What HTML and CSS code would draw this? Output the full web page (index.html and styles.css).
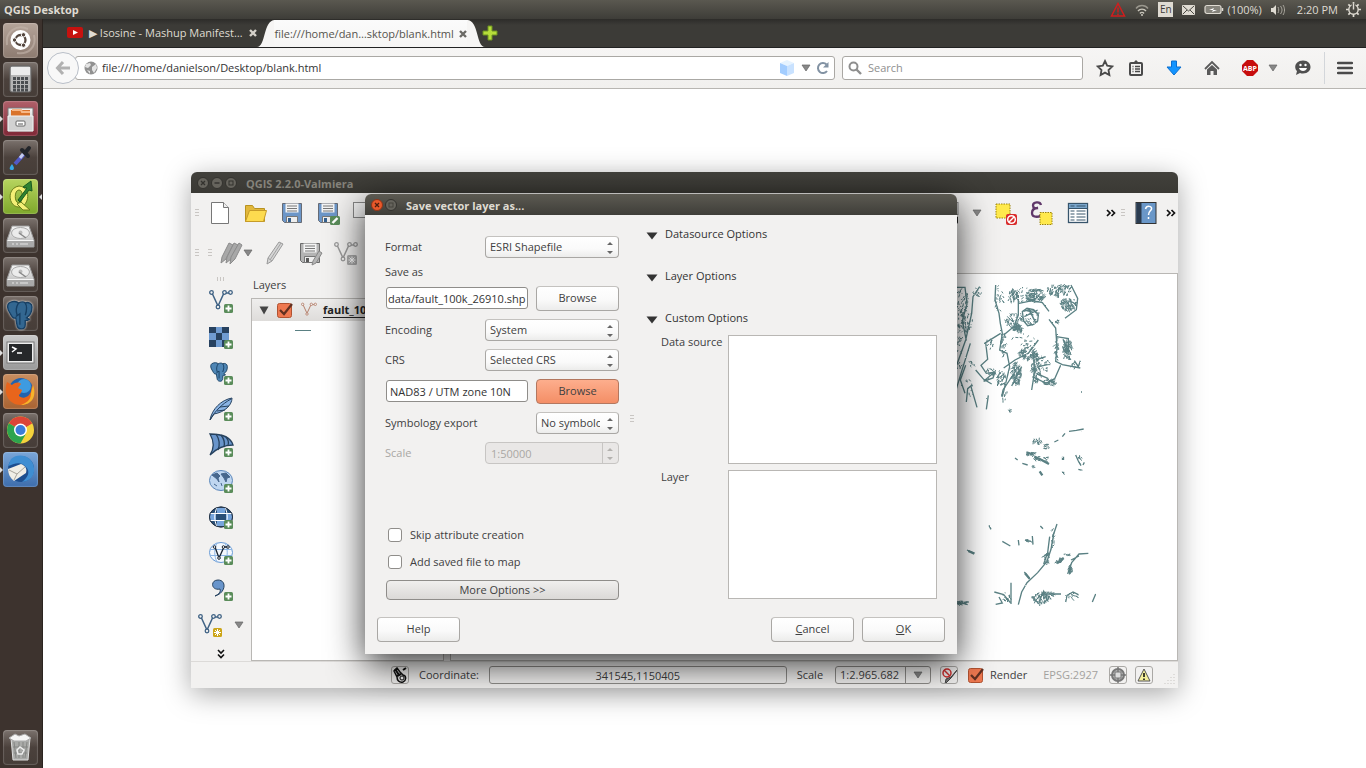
FILE: index.html
```html
<!DOCTYPE html>
<html lang="en">
<head>
<meta charset="utf-8">
<title>QGIS Desktop</title>
<link rel="stylesheet" href="styles.css">
</head>
<body>
<svg class="defs" aria-hidden="true">
  <defs>
    <linearGradient id="metal" x1="0" y1="0" x2="0" y2="1"><stop offset="0" stop-color="#f4f4f4"/><stop offset="1" stop-color="#b4b4b4"/></linearGradient>
    <filter id="rough" x="0" y="0" width="1" height="1"><feTurbulence type="fractalNoise" baseFrequency=".25" numOctaves="2" seed="4"/><feDisplacementMap in="SourceGraphic" scale="5" xChannelSelector="R" yChannelSelector="G"/></filter>
    <symbol id="plus" viewBox="0 0 24 24"><rect x="15" y="15" width="9" height="9" rx="1.5" fill="#5a8c5a"/><path d="M19.5 16.500v6M16.500 19.500h6" stroke="#fff" stroke-width="1.800"/></symbol>
    <symbol id="nodes" viewBox="0 0 24 24"><path d="M3 4l6 13 6-13h6" fill="none" stroke="currentColor" stroke-width="1.500"/><g fill="#f2f1f0" stroke="currentColor" stroke-width="1.300"><circle cx="2.500" cy="3.500" r="1.800"/><circle cx="9" cy="18" r="1.800"/><circle cx="15.500" cy="3.500" r="1.800"/><circle cx="21.500" cy="3.500" r="1.800"/></g></symbol>
    <symbol id="floppy" viewBox="0 0 24 24"><path d="M2.500 2.500h19v19h-17l-2-2z" fill="currentColor" stroke="#666b75"/><path d="M5.500 2.500h13v9h-13z" fill="#f4f4f4"/><path d="M7 5h10M7 7.500h10M7 10h10" stroke="#777"/><path d="M6.500 15.500h11v6h-11z" fill="#eee" stroke="#777"/><rect x="8" y="17" width="3" height="4" fill="#35608e"/></symbol>
    <symbol id="pencil" viewBox="0 0 24 24"><path d="M17 1l4 2-11 17-5 3 1-6z" fill="#d5d5d5" stroke="#999"/><path d="M19 2L8 19M6 17l4 3" stroke="#a2a2a2" fill="none"/></symbol>
    <symbol id="down" viewBox="0 0 10 8"><path d="M1 1h8L5 7z" fill="#888" stroke="#666" stroke-width=".7"/></symbol>
    <symbol id="spin" viewBox="0 0 8 14"><path d="M1 4l3-3 3 3zM1 10l3 3 3-3z" fill="currentColor"/></symbol>
    <symbol id="more" viewBox="0 0 10 8"><path d="M1 1l3 3-3 3M5.500 1l3 3-3 3" fill="none" stroke="#111" stroke-width="1.700"/></symbol>
    <symbol id="ball" viewBox="0 0 14 14"><circle cx="7" cy="7" r="5.500" fill="#66645d" stroke="#33322e"/></symbol>
    <symbol id="tick" viewBox="0 0 18 18"><rect x="1.500" y="2.500" width="14" height="14" rx="2" fill="#ee7850" stroke="#b15231"/><path d="M4 9l4 4 8-10" fill="none" stroke="#613021" stroke-width="2.200"/></symbol>
    <symbol id="disk" viewBox="0 0 35 35"><path d="M9 8h17l5 14v7H4v-7z" fill="url(#metal)" stroke="#999"/><ellipse cx="17.500" cy="15" rx="9" ry="5.500" fill="#ececec" stroke="#aaa"/><circle cx="17.500" cy="14.500" r="2" fill="#bbb"/><path d="M23 20l-7-5" stroke="#888" stroke-width="1.500"/><path d="M4.500 22.500h26" stroke="#f6f6f6"/><path d="M5 23h25v5.500H5z" fill="#a9a9a9"/><path d="M9 26h2M13 26h2M17 26h8" stroke="#e6e6e6"/></symbol>
    <symbol id="cross" viewBox="0 0 10 10"><path d="M2 2l6 6M8 2l-6 6" stroke="currentColor" stroke-width="2.400"/></symbol>
    <symbol id="elephant" viewBox="0 0 24 24"><path d="M3 3c3-2 6-1 7 0 2-1 4-1 5 0 2-1 5 0 5 3 0 4-1 6-4 8l2 1c-1 1-2 1-3 1v3c0 4-5 4-6 1l-1-6c-2 1-3-1-4-3C2 8 1 5 3 3z" fill="currentColor" stroke="#173f63"/><path d="M10 3c-2 3-2 6-1 9M15 3c2 3 1 6 0 9M8 13l3-2v8" stroke="#173f63" fill="none"/></symbol>
  </defs>
</svg>

<header class="panel">
  <h1 class="panel-title">QGIS Desktop</h1>
  <div class="indicators">
    <svg width="16" height="16" viewBox="0 0 16 16"><path d="M8 1.500L14.500 14h-13z" fill="none" stroke="#d21d1d" stroke-width="1.500"/><path d="M8 5.500v5M8 11.500v1.500" stroke="#d21d1d" stroke-width="1.400"/></svg>
    <svg width="16" height="14" viewBox="0 0 16 14"><g fill="none" stroke="#c9c6bb" stroke-width="1.400"><path d="M2 5.500c3-4 9-4 12 0" opacity=".6"/><path d="M4 8c2-2.500 6-2.500 8 0"/><path d="M6 10.500c1-1.500 3-1.500 4 0"/></g><circle cx="8" cy="12" r="1" fill="#c9c6bb"/></svg>
    <span class="lang">En</span>
    <svg width="15" height="12" viewBox="0 0 15 12"><rect x="1" y="1" width="13" height="10" rx="1" fill="#dfdbd2"/><path d="M2 2l5.500 5L13 2M2 10l4-4M13 10L9 6" fill="none" stroke="#4a4943"/></svg>
    <span class="battery"><svg width="20" height="12" viewBox="0 0 20 12"><rect x="1" y="1.500" width="16" height="8" rx="2" fill="#85837b" stroke="#dfdbd2" stroke-width="1.200"/><path d="M18.500 4v3" stroke="#dfdbd2" stroke-width="1.500"/><path d="M5 6l5-2-1 2h4L8 8l1-2z" fill="#fff"/></svg>(100%)</span>
    <svg class="sound" width="16" height="14" viewBox="0 0 16 14"><path d="M1 5h2l3-3v10L3 9H1z" fill="#dfdbd2"/><path d="M8 4c1 2 1 4 0 6M10.500 3c2 3 2 5 0 8M13 2c2 3 2 7 0 10" fill="none" stroke="#aaa79e"/></svg>
    <time>2:20 PM</time>
    <svg width="15" height="15" viewBox="0 0 16 16"><circle cx="8" cy="8" r="5" fill="none" stroke="#dfdbd2" stroke-width="1.500"/><path d="M8 0v3M8 13v3M0 8h3M13 8h3M2.500 2.500l2 2M13.500 2.500l-2 2M2.500 13.500l2-2M13.500 13.500l-2-2" stroke="#dfdbd2" stroke-width="1.800"/><path d="M8 2v6" stroke="#4b4a44" stroke-width="4"/><path d="M8 2v6" stroke="#dfdbd2" stroke-width="1.500"/></svg>
  </div>
</header>

<div class="desktop">
  <nav class="launcher" aria-label="Launcher">
    <button class="app dash" aria-label="Dash"><svg viewBox="0 0 35 35"><path d="M4 22C2 8 14 1 25 6M31 12c3 12-6 20-17 18" fill="none" stroke="#c4b5ab" stroke-width="2" opacity=".6"/><circle cx="17.500" cy="17" r="10" fill="#fff"/><circle cx="17.500" cy="17" r="5" fill="none" stroke="#55473f" stroke-width="2.300"/><g fill="#55473f" stroke="#fff" stroke-width="1"><circle cx="11.500" cy="17" r="2.200"/><circle cx="20.500" cy="11.800" r="2.200"/><circle cx="20.500" cy="22.200" r="2.200"/></g></svg></button>
    <button class="app" aria-label="Calculator"><svg viewBox="0 0 35 35"><rect x="7" y="4" width="21" height="26" rx="2" fill="#b5b5b5" stroke="#666"/><rect x="8" y="5" width="19" height="8" fill="#ececec"/><g stroke="#4a4d50" stroke-width="3" stroke-dasharray="3 1"><path d="M10 16.500h16M10 20.500h16M10 24.500h16M10 28h16"/></g></svg></button>
    <button class="app files run" aria-label="Files"><svg viewBox="0 0 35 35"><path d="M5 7h25v23H5z" fill="url(#metal)" stroke="#777"/><path d="M8 9h19v6H8z" fill="#d9732b"/><path d="M9 9h9l1 2h8" stroke="#f7b786" fill="none" stroke-width="2"/><path d="M5 15h25v15H5z" fill="#d2d2d2" stroke="#f3f3f3"/><rect x="13" y="20" width="9" height="5" rx="1" fill="#fff" stroke="#666"/><path d="M15 23h5" stroke="#555"/></svg></button>
    <button class="app" aria-label="Color picker"><svg viewBox="0 0 35 35"><path d="M21 14L12 24" stroke="#5159c7" stroke-width="4"/><path d="M21 13l-4 5" stroke="#c3cbee" stroke-width="3"/><path d="M19 10l6 6M22 13l4-5" stroke="#22252a" stroke-width="4" stroke-linecap="round"/><path d="M9 24c-4 5-2 6 0 6s3-2 0-6z" fill="#35a9e8"/></svg></button>
    <button class="app qgis run active" aria-label="QGIS"><svg viewBox="0 0 35 35"><path d="M16 7c-13 2-11 22 1 21 9-1 12-20-1-21zm0 4c5 0 4 13 0 13-5 0-5-13 0-13z" fill="#f4ef76" stroke="#6b7f1b"/><path d="M18 23l9 8h-7l-6-6z" fill="#f4ef76" stroke="#6b7f1b"/><path d="M15 21L24 9l-4-1 8-6 1 10-3-1-9 12z" fill="#2e8231" stroke="#195b20"/></svg></button>
    <button class="app" aria-label="Drive 1"><svg viewBox="0 0 35 35"><use href="#disk"/></svg></button>
    <button class="app" aria-label="Drive 2"><svg viewBox="0 0 35 35"><use href="#disk"/></svg></button>
    <button class="app pg" aria-label="pgAdmin"><svg viewBox="0 0 35 35"><g transform="translate(2 3) scale(1.350)"><use href="#elephant" width="24" height="24"/></g></svg></button>
    <button class="app term run" aria-label="Terminal"><svg viewBox="0 0 35 35"><rect x="4" y="7" width="27" height="21" fill="#eee" stroke="#777"/><rect x="6" y="9" width="23" height="17" fill="#26282a"/><path d="M9 12l4 2-4 3M14 18h5" fill="none" stroke="#fff" stroke-width="1.500"/></svg></button>
    <button class="app fox run" aria-label="Firefox"><svg viewBox="0 0 35 35"><circle cx="18" cy="16" r="12" fill="#2463ad"/><circle cx="21" cy="12" r="7" fill="#3e9be0"/><path d="M4 8l5 3c4-3 7-3 9-1l-3 4 4 2c-1 4-3 4-3 6 5 4 11 0 12-5l1-6c4 9 0 20-11 20C6 31 0 20 4 8z" fill="#e8651c"/><path d="M30 11c4 11-1 20-12 20 8-3 10-7 10-12z" fill="#f7b42a"/></svg></button>
    <button class="app" aria-label="Chrome"><svg viewBox="0 0 35 35"><circle cx="17.500" cy="17" r="13.500" fill="#f5d33c"/><path d="M17.500 17L5.800 10.300A13.500 13.500 0 0 1 29.200 10.300z" fill="#dc4537"/><path d="M5.800 10.300A13.500 13.500 0 0 0 17.500 30.500l5-9-5-4.500z" fill="#2da44e"/><path d="M29.200 10.300H17.500v7z" fill="#dc4537"/><circle cx="17.500" cy="17" r="6.500" fill="#fff"/><circle cx="17.500" cy="17" r="5" fill="#3b7dd8"/></svg></button>
    <button class="app bird run" aria-label="Thunderbird"><svg viewBox="0 0 35 35"><circle cx="18" cy="17" r="13" fill="#1d4e8f"/><path d="M8 7C16 0 30 4 31 16c1 9-5 13-12 14 7-5 8-11 4-15C17 8 10 13 5 14z" fill="#3f8ed2"/><path d="M5 17l13-5c5 2 6 5 5 9l-12 8c-4-3-6-7-6-12z" fill="#f0eee6"/><path d="M6 18l8 4 8-7M14 22l-3 6" fill="none" stroke="#a8a49b"/></svg></button>
    <button class="app trash" aria-label="Trash"><svg viewBox="0 0 35 35"><path d="M8 8h19l-2 22H10z" fill="#a9aaa8" stroke="#dedede"/><path d="M11 12l2 16M16 12v16M20 12v16M24 12l-2 16M10 17h15M11 23h13" stroke="#858684"/><path d="M6 8l6-4 4 2 6-2 6 4-5 3H11z" fill="#f5f5f5" stroke="#aaa"/><path d="M14 20l3-3 4 3-2 4h-4z" fill="none" stroke="#eee" stroke-width="1.500"/></svg></button>
  </nav>

  <main class="browser">
    <div class="tabs">
      <div class="tab">
        <svg width="16" height="12" viewBox="0 0 16 12"><rect width="16" height="11" rx="2" fill="#c6120f"/><path d="M6 3l5 2.500L6 8z" fill="#fff"/></svg>
        <span class="tab-text">▶ Isosine - Mashup Manifest…</span>
        <button class="tab-close" aria-label="Close tab"><svg width="10" height="10"><use href="#cross"/></svg></button>
      </div>
      <div class="tab current">
        <svg width="18" height="28" viewBox="0 0 18 28"><path d="M0 28C9 28 6 1 18 1v27z" fill="#f6f5f4"/></svg>
        <span class="tab-body"><span class="tab-text">file:///home/dan…sktop/blank.html</span>
        <button class="tab-close" aria-label="Close tab"><svg width="10" height="10"><use href="#cross"/></svg></button></span>
        <svg width="18" height="28" viewBox="0 0 18 28"><path d="M18 28C9 28 12 1 0 1v27z" fill="#f6f5f4"/></svg>
      </div>
      <button class="new-tab" aria-label="New tab"><svg width="16" height="16" viewBox="0 0 16 16"><path d="M6 1h4v5h5v4h-5v5H6v-5H1V6h5z" fill="#b6dc3a" stroke="#6c9320"/></svg></button>
    </div>
    <div class="navbar">
      <button class="back" aria-label="Back"><svg width="16" height="16" viewBox="0 0 16 16"><path d="M8 2L2.500 8 8 14M3 8h12" fill="none" stroke="#b1b1b1" stroke-width="3"/></svg></button>
      <div class="urlbar">
        <svg width="14" height="14" viewBox="0 0 14 14"><circle cx="7" cy="7" r="6.500" fill="#919191"/><path d="M2 3l4-1 1 2-3 3-3-1zM8 6l4-3 1 4-3 5-2-3zM3 9l3 1v3z" fill="#e4e4e4"/></svg>
        <input aria-label="Address" value="file:///home/danielson/Desktop/blank.html">
        <svg width="16" height="18" viewBox="0 0 16 18"><path d="M1 4l7-3 7 3-7 3z" fill="#e6f3ff"/><path d="M1 4l7 3v10l-7-3z" fill="#a3cdff"/><path d="M15 4L8 7v10l7-3z" fill="#c9e2ff"/></svg>
        <svg width="10" height="8"><use href="#down"/></svg>
        <button class="bare" aria-label="Reload"><svg width="14" height="14" viewBox="0 0 14 14"><path d="M11 10A5 5 0 1 1 10.500 3.500" fill="none" stroke="#8292a3" stroke-width="2"/><path d="M12.500 1v5.500H7z" fill="#8292a3"/></svg></button>
      </div>
      <div class="search">
        <svg width="14" height="14" viewBox="0 0 14 14"><circle cx="5.500" cy="5.500" r="4" fill="none" stroke="#8e8e8e" stroke-width="2"/><path d="M8.500 8.500l4.500 4.500" stroke="#8e8e8e" stroke-width="2.400"/></svg>
        <input aria-label="Search" placeholder="Search">
      </div>
      <div class="actions">
        <button class="act" aria-label="Bookmark"><svg width="18" height="18" viewBox="0 0 18 18"><path d="M9 2l2.200 4.700 5 .7-3.700 3.600.9 5L9 13.600 4.600 16l.9-5L1.800 7.400l5-.7z" fill="none" stroke="#4a4a4a" stroke-width="1.800"/></svg></button>
        <button class="act" aria-label="Bookmarks list"><svg width="16" height="18" viewBox="0 0 16 18"><rect x="2" y="4" width="12" height="12" rx="1" fill="none" stroke="#4a4a4a" stroke-width="2"/><path d="M5 4l3-3 3 3z" fill="#4a4a4a"/><path d="M4.500 7.500h1M7 7.500h5M4.500 10h1M7 10h5M4.500 12.500h1M7 12.500h5" stroke="#4a4a4a" stroke-width="1.500"/></svg></button>
        <button class="act" aria-label="Downloads"><svg width="16" height="16" viewBox="0 0 16 16"><path d="M5.500 1h5v6H15l-7 8-7-8h4.500z" fill="#1394ff" stroke="#0b6fd0"/></svg></button>
        <button class="act" aria-label="Home"><svg width="16" height="16" viewBox="0 0 16 16"><path d="M1 9l7-7 7 7" fill="none" stroke="#5a5a5a" stroke-width="1.800"/><path d="M3 9.500L8 5l5 4.500V15h-3.500v-4h-3v4H3z" fill="#5a5a5a"/></svg></button>
        <button class="act" aria-label="Adblock Plus"><svg width="18" height="18" viewBox="0 0 18 18"><path d="M6 1h6l5 5v6l-5 5H6l-5-5V6z" fill="#c70d0d"/><text x="9" y="11.500" text-anchor="middle" class="abp">ABP</text></svg></button>
        <button class="act slim" aria-label="Adblock menu"><svg width="10" height="8"><use href="#down"/></svg></button>
        <button class="act" aria-label="Chat"><svg width="18" height="16" viewBox="0 0 18 16"><path d="M9 .5c10 0 10 13 0 13-1 0-2 0-3-.5L2 15l1-4C-1 7 2 .5 9 .5z" fill="#4f4f4f"/><circle cx="6.500" cy="5" r="1.200" fill="#fff"/><circle cx="11.500" cy="5" r="1.200" fill="#fff"/><path d="M5 8h8c-1 4-7 4-8 0z" fill="#fff"/></svg></button>
        <button class="act menu" aria-label="Menu"><svg width="16" height="14" viewBox="0 0 16 14"><path d="M1 2h14M1 7h14M1 12h14" stroke="#4a4a4a" stroke-width="2.400" stroke-linecap="round"/></svg></button>
      </div>
    </div>
    <div class="page"></div>
  </main>
</div>

<section class="window qgis-window" aria-label="QGIS 2.2.0-Valmiera">
  <div class="titlebar dim">
    <svg width="14" height="14" viewBox="0 0 14 14"><use href="#ball"/><path d="M5 5l4 4M9 5L5 9" stroke="#33322e" stroke-width="1.300"/></svg>
    <svg width="14" height="14" viewBox="0 0 14 14"><use href="#ball"/><path d="M4.500 7h5" stroke="#33322e" stroke-width="1.400"/></svg>
    <svg width="14" height="14" viewBox="0 0 14 14"><use href="#ball"/><rect x="5" y="5" width="4" height="4" fill="none" stroke="#33322e"/></svg>
    <h2 class="title">QGIS 2.2.0-Valmiera</h2>
  </div>
  <div class="toolbar">
    <i class="grip"></i>
    <button class="tool" aria-label="New"><svg viewBox="0 0 24 24"><path d="M3.500 1.500h12l5 5v16h-17z" fill="#fff" stroke="#777"/><path d="M15.500 1.500v5h5" fill="#eee" stroke="#777"/></svg></button>
    <button class="tool" aria-label="Open"><svg viewBox="0 0 24 24"><path d="M1.500 20.500v-16h7l2 3h10v13z" fill="#e2b83c" stroke="#b89220"/><path d="M1.500 20.500l4-11h17l-3 11z" fill="#fddb4f" stroke="#c69b28"/></svg></button>
    <button class="tool blue" aria-label="Save"><svg viewBox="0 0 24 24"><use href="#floppy"/></svg></button>
    <button class="tool blue" aria-label="Save as"><svg viewBox="0 0 24 24"><use href="#floppy"/><rect x="14" y="15" width="10" height="9" rx="1.500" fill="#5a8c5a"/><path d="M16.500 22l5-5" stroke="#fff" stroke-width="2.400"/></svg></button>
    <button class="tool" aria-label="Composer"><svg viewBox="0 0 24 24"><rect x="1.500" y="1.500" width="21" height="15" fill="#f6f6f6" stroke="#888"/></svg></button>
    <button class="tool push" aria-label="Select"><svg viewBox="0 0 24 24"><rect x="2" y="1.500" width="20" height="12" fill="#eee" stroke="#888"/><path d="M18 14v8l2-2 2 3v-7z" fill="#222"/></svg></button>
    <svg width="10" height="8"><use href="#down"/></svg>
    <button class="tool" aria-label="Deselect"><svg viewBox="0 0 24 24"><rect x="2" y="3" width="14" height="14" fill="#ffe94c" stroke="#9c850d" stroke-dasharray="1.500 1"/><rect x="12" y="13" width="11" height="11" rx="2" fill="#d92b2b"/><circle cx="17.500" cy="18.500" r="3.800" fill="none" stroke="#fff" stroke-width="1.500"/><path d="M15 21l5-5" stroke="#fff" stroke-width="1.500"/></svg></button>
    <button class="tool" aria-label="Select by expression"><svg viewBox="0 0 24 24"><path d="M11 4C10 0 3 1 3 4.500 3 7 5 7.500 8 7 4 7 2 9 2 12c0 5 9 5 10 0" fill="none" stroke="#60386a" stroke-width="2.300"/><rect x="10" y="11.500" width="12" height="12" fill="#ffe94c" stroke="#9c850d" stroke-dasharray="1.500 1"/></svg></button>
    <button class="tool" aria-label="Attribute table"><svg viewBox="0 0 24 24"><rect x="2.500" y="2.500" width="19" height="19" fill="#fff" stroke="#37546b" stroke-width="1.300"/><path d="M3 3h18v4H3z" fill="#7aa6cc"/><path d="M4.500 5h4M10.500 5h9M4.500 10h4M10.500 10h9M4.500 13h4M10.500 13h9M4.500 16h4M10.500 16h9M4.500 19h4M10.500 19h9M3 7.500h18" stroke="#37546b" stroke-width="1.200"/></svg></button>
    <svg class="chev" width="10" height="8"><use href="#more"/></svg>
    <i class="grip"></i>
    <button class="tool" aria-label="Help contents"><svg viewBox="0 0 24 24"><rect x="2" y="1.500" width="20" height="21" fill="#6a97c8" stroke="#333"/><path d="M2.500 2h5v20h-5z" fill="#2b3b4f"/><path d="M11.500 8c1-4 7-3 6 0-.5 2-3 2-3 6M14.500 16v2" fill="none" stroke="#fff" stroke-width="1.500"/></svg></button>
    <svg class="chev-last" width="10" height="8"><use href="#more"/></svg>
  </div>
  <div class="toolbar edit">
    <i class="grip"></i><i class="grip"></i>
    <button class="tool" aria-label="Current edits"><svg viewBox="0 0 24 24"><g fill="#a8a8a8" stroke="#8b8b8b"><path d="M9 2l4 2-7 14-5 4 1-6z"/><path d="M14 2l4 2-7 14-5 4 1-6z"/><path d="M19 2l3 2-7 14-5 5 1-7z"/></g></svg></button>
    <svg class="edit-drop" width="10" height="8"><use href="#down"/></svg>
    <button class="tool" aria-label="Toggle editing"><svg viewBox="0 0 24 24"><use href="#pencil"/></svg></button>
    <button class="tool gray" aria-label="Save edits"><svg viewBox="0 0 24 24"><use href="#floppy"/><path d="M21 10l3 2-6 10-4 2 1-4z" fill="#b5b5b5" stroke="#888"/></svg></button>
    <button class="tool" aria-label="Add feature"><svg viewBox="0 0 24 24"><use href="#nodes" color="#9a9a9a"/><rect x="13" y="14" width="10" height="10" rx="1.500" fill="#aaa"/><path d="M18 15.500v7M14.500 19h7M15.500 16.500l5 5M20.500 16.500l-5 5" stroke="#fff"/></svg></button>
  </div>
  <div class="workspace">
    <div class="sidebar">
      <i class="grip flat"></i>
      <button class="tool" aria-label="Add vector layer"><svg viewBox="0 0 24 24"><use href="#nodes" color="#3f6284"/><use href="#plus"/></svg></button>
      <button class="tool" aria-label="Add raster layer"><svg viewBox="0 0 24 24"><path d="M0 2h20v20H0z" fill="#27415f"/><path d="M7 2h6v6H7zM0 8h7v7H0zM13 8h7v7h-7zM7 15h6v7H7z" fill="#6f9bd1"/><use href="#plus"/></svg></button>
      <button class="tool pgblue" aria-label="Add PostGIS layer"><svg viewBox="0 0 24 24"><use href="#elephant" width="22" height="22"/><use href="#plus"/></svg></button>
      <button class="tool" aria-label="Add SpatiaLite layer"><svg viewBox="0 0 24 24"><path d="M1 23C3 12 12 3 23 1c0 7-7 14-18 16z" fill="#8bb4e4" stroke="#26425f"/><path d="M1 23C6 14 13 7 22 2M8 14l8-1M11 10l9-1" fill="none" stroke="#26425f"/><use href="#plus"/></svg></button>
      <button class="tool" aria-label="Add MSSQL layer"><svg viewBox="0 0 24 24"><path d="M1 1c14 0 21 4 23 11-9 0-16 3-23 10 4-6 4-14 0-21z" fill="#6995cb" stroke="#26425f" stroke-width="1.300"/><path d="M7 1c4 6 4 11 2 16M12 2c4 5 4 8 3 12M17 4c3 4 3 6 2 8" fill="none" stroke="#26425f" stroke-width="1.300"/><use href="#plus"/></svg></button>
      <button class="tool" aria-label="Add WMS layer"><svg viewBox="0 0 24 24"><ellipse cx="12" cy="11.500" rx="11.500" ry="10" fill="#bfd6f0" stroke="#5b87ba"/><path d="M3 6l5-2 3 3-2 2 1 4-2-3zM12 5l5-1 4 4-3 1-1 4-2-4zM5 15l3 2M12 14l1 3" fill="#47678d" stroke="#47678d"/><use href="#plus"/></svg></button>
      <button class="tool" aria-label="Add WCS layer"><svg viewBox="0 0 24 24"><ellipse cx="12" cy="12" rx="11.500" ry="10" fill="#294e75" stroke="#26364a"/><path d="M8 3h8v5H8zM1 9h6v6H1zM17 9h6v6h-6zM8 16h8v5H8z" fill="#77a5dc"/><path d="M1 8.500h22M1 15.500h22M8 2.500c-3 6-3 13 0 19M16 2.500c3 6 3 13 0 19" fill="none" stroke="#fff"/><ellipse cx="12" cy="12" rx="11.500" ry="10" fill="none" stroke="#26364a"/><use href="#plus"/></svg></button>
      <button class="tool" aria-label="Add WFS layer"><svg viewBox="0 0 24 24"><ellipse cx="12" cy="11.500" rx="11.500" ry="10" fill="#f4f8fd" stroke="#689bd6"/><path d="M1 8.500h22M1 14.500h22M8 2c-3 6-3 13 0 19M16 2c3 6 3 13 0 19" fill="none" stroke="#8cb6e5"/><path d="M6 6l4 11 5-11h4" fill="none" stroke="#1b2633" stroke-width="1.300"/><g fill="#fff" stroke="#1b2633"><circle cx="5.500" cy="6" r="1.300"/><circle cx="10" cy="17" r="1.300"/><circle cx="14.500" cy="6" r="1.300"/><circle cx="19" cy="6" r="1.300"/></g><use href="#plus"/></svg></button>
      <button class="tool" aria-label="Add delimited text layer"><svg viewBox="0 0 24 24"><path d="M6 19c4-2 6-4 5-7-9 2-10-9-2-9 9 0 8 13-3 16z" fill="#6995cb" stroke="#26425f"/><use href="#plus"/></svg></button>
      <div class="new-layer">
        <button class="tool" aria-label="New layer"><svg viewBox="0 0 24 24"><use href="#nodes" color="#3f6284"/><rect x="15" y="15" width="9" height="9" rx="1.500" fill="#cca518"/><path d="M19.500 16v7M16 19.500h7M17 17l5 5M22 17l-5 5" stroke="#fff"/></svg></button>
        <svg width="10" height="8"><use href="#down"/></svg>
      </div>
      <svg width="8" height="10" viewBox="0 0 8 10"><path d="M1 1l3 3 3-3M1 5.500l3 3 3-3" fill="none" stroke="#111" stroke-width="1.600"/></svg>
    </div>
    <div class="layers">
      <h3 class="layers-title">Layers</h3>
      <div class="tree">
        <div class="layer">
          <svg width="10" height="9" viewBox="0 0 10 9"><path d="M.5.5h9L5 8.500z" fill="#444"/></svg>
          <label class="tickbox"><input type="checkbox" checked aria-label="Show layer"><svg width="18" height="18"><use href="#tick"/></svg></label>
          <svg width="16" height="16" viewBox="0 0 24 24"><use href="#nodes" color="#b5806c"/></svg>
          <span class="layer-name">fault_100k_26910</span>
        </div>
        <i class="swatch"></i>
      </div>
    </div>
    <div class="map">
      <svg width="228" height="386" viewBox="0 12 684 1158" role="img" aria-label="Fault map">
        <g filter="url(#rough)">
        <g fill="none" stroke="#5a8083" stroke-width="4">
          <path d="M0 350L50 210 68 130 72 80 92 50M0 430l36-120 28-90M48 370l-14-40 16-44M22 52h26l6 50-14 50 12 60M66 350l18 62M52 396l4-40 12-10M112 418l6-42M140 45l-2 45 12 40 4 30 6 30M160 190l-8 50 22 10 8 40-12 50-10 40M155 190l-45 28 6 50-20 18 16 24 26-4-6 18-28 10 30-26M80 300l24 28 24 14M208 75v60l-14 35M194 170l-30 25M210 100l40-8 30 6 20 26M300 148l20 26 4 60-4 40 20 10 54 10M335 286l-18 40-26 14-40-20M376 272l12 18 6-18M322 200l36 6v40l-16-38M268 210l-30 40-40 20-34 24M366 45l20 40-4 34-34 26"/>
          <path d="M220 125l14-10 20 4 14 16-2 18-12 10-18 4-12-14zM226 140l40-20M240 118l20 40M202 300l-40 60-4 20M218 290l-30 58M248 360l8-50-2-60M260 270l30-10M268 290l28-6M262 310l36 16"/>
          <path d="M360 484l22-3 22-4M316 516l12-6M340 500l8-10M206 570l-8-6M220 580l16 5M380 555l8 18 8 14M388 598l12 3M402 585l4-8M396 366h3"/>
          <path d="M324 762l-10 30-8 46-12 36-28 34-32 30-16 28-10 38M302 800l-6 48-12 34M160 814l24 14M208 810l2 16M250 798l2 26M228 810l14 4M274 768l8 8M120 766l6 12M54 840l22 10M226 906l16 20M186 938v64M136 966l28 8 20 24M140 1003l20-4-10-18M250 980l18 20 16-36 12 30M280 972h56M350 996l4-20 18-10 16 8M430 996l10-24M356 912l12-34 22-26 28-2M366 870l24-12M20 994l36 10"/>
          <path stroke-width="7" d="M232 547l20 6M256 560l22 10 22 12M272 604l8 12M342 560v10M324 880l20-16M360 906l6-14M58 843l18 8M228 910l14 16"/>
        </g>
        <g id="traces" fill="none" stroke="#5a8083" stroke-width="3"></g>
        </g>
      </svg>
    </div>
  </div>
  <div class="statusbar">
    <button class="mini" aria-label="Toggle extents"><svg width="16" height="16" viewBox="0 0 16 16"><path d="M2 4l3-3 3 4 3 3c4 1 3 6 0 7-4 1-6-2-6-5z" fill="#ddd" stroke="#111" stroke-width="1.500"/><path d="M3 2l4 6M5 9l4-2M11 3l3-2" fill="none" stroke="#111" stroke-width="2"/><circle cx="10" cy="11" r="2" fill="#fff" stroke="#111"/></svg></button>
    <label for="coord">Coordinate:</label>
    <input id="coord" class="coord" value="341545,1150405">
    <label for="mapscale">Scale</label>
    <span class="combo"><input id="mapscale" value="1:2.965.682"><button aria-label="Scales"><svg width="10" height="8"><use href="#down"/></svg></button></span>
    <button class="mini" aria-label="Stop rendering"><svg width="18" height="18" viewBox="0 0 18 18"><path d="M17 2l-7 9-6 6 1-5 5-2z" fill="#777" stroke="#444"/><circle cx="6" cy="6" r="4" fill="none" stroke="#d02e2e" stroke-width="1.500"/><path d="M3 3l6 6" stroke="#d02e2e" stroke-width="1.500"/></svg></button>
    <label class="tickbox"><input type="checkbox" checked><svg width="18" height="18"><use href="#tick"/></svg>Render</label>
    <span class="epsg">EPSG:2927</span>
    <button class="mini" aria-label="CRS status"><svg width="16" height="16" viewBox="0 0 16 16"><circle cx="8" cy="8" r="6" fill="#bbb" stroke="#777" stroke-width="2"/><path d="M8 0v16M0 8h16" stroke="#777" stroke-width="1.500"/><rect x="5" y="5" width="6" height="6" fill="#ddd" stroke="#777"/></svg></button>
    <button class="mini warn" aria-label="Messages"><svg width="14" height="14" viewBox="0 0 14 14"><path d="M7 1l6 12H1z" fill="#f5f09b" stroke="#555"/><path d="M7 5v4M7 10.500V12" stroke="#111" stroke-width="1.600"/></svg></button>
    <svg class="size-grip" width="12" height="12" viewBox="0 0 12 12"><path d="M10 1v1M7 4v1M10 4v1M4 7v1M7 7v1M10 7v1M1 10v1M4 10v1M7 10v1M10 10v1" stroke="#c9c6c3"/></svg>
  </div>
</section>

<section class="window dialog" role="dialog" aria-labelledby="dialog-title">
  <div class="titlebar">
    <svg width="14" height="14" viewBox="0 0 14 14"><circle cx="7" cy="7" r="5.500" fill="#e9582a" stroke="#8f3518"/><path d="M5 5l4 4M9 5L5 9" stroke="#4d1f0f" stroke-width="1.300"/></svg>
    <svg width="14" height="14" viewBox="0 0 14 14"><use href="#ball"/><rect x="5" y="5" width="4" height="4" fill="none" stroke="#44433d"/></svg>
    <h2 class="title" id="dialog-title">Save vector layer as...</h2>
  </div>
  <form class="form">
    <div class="fields">
      <div class="row"><label for="format">Format</label><span class="select wide"><select id="format"><option>ESRI Shapefile</option></select><svg width="8" height="14"><use href="#spin"/></svg></span></div>
      <label class="above" for="path">Save as</label>
      <div class="row tall"><input class="text path" id="path" value="data/fault_100k_26910.shp"><button type="button" class="btn">Browse</button></div>
      <div class="row spaced"><label for="enc">Encoding</label><span class="select wide"><select id="enc"><option>System</option></select><svg width="8" height="14"><use href="#spin"/></svg></span></div>
      <div class="row spaced"><label for="crs">CRS</label><span class="select wide"><select id="crs"><option>Selected CRS</option></select><svg width="8" height="14"><use href="#spin"/></svg></span></div>
      <div class="row tall spaced"><input class="text" aria-label="CRS name" value="NAD83 / UTM zone 10N"><button type="button" class="btn hot">Browse</button></div>
      <div class="row spaced"><label for="sym">Symbology export</label><span class="select narrow"><select id="sym"><option>No symbology</option></select><svg width="8" height="14"><use href="#spin"/></svg></span></div>
      <div class="row spaced off"><label for="scale">Scale</label><span class="select wide spinner"><input id="scale" value="1:50000" disabled><svg width="8" height="14"><use href="#spin"/></svg></span></div>
      <div class="checks">
        <label class="check"><input type="checkbox">Skip attribute creation</label>
        <label class="check"><input type="checkbox">Add saved file to map</label>
        <button type="button" class="btn pressed">More Options &gt;&gt;</button>
      </div>
    </div>
    <i class="grip splitter"></i>
    <div class="options">
      <button type="button" class="group"><svg width="12" height="8" viewBox="0 0 12 8"><path d="M.5.5h11L6 7.500z" fill="#333"/></svg>Datasource Options</button>
      <button type="button" class="group"><svg width="12" height="8" viewBox="0 0 12 8"><path d="M.5.5h11L6 7.500z" fill="#333"/></svg>Layer Options</button>
      <button type="button" class="group"><svg width="12" height="8" viewBox="0 0 12 8"><path d="M.5.5h11L6 7.500z" fill="#333"/></svg>Custom Options</button>
      <div class="custom">
        <label for="ds">Data source</label><textarea id="ds"></textarea>
        <label for="lo">Layer</label><textarea id="lo"></textarea>
      </div>
    </div>
  </form>
  <div class="buttons">
    <button class="btn help">Help</button>
    <button class="btn"><u>C</u>ancel</button>
    <button class="btn"><u>O</u>K</button>
  </div>
</section>
<script src="map.js"></script>
</body>
</html>
```

FILE: styles.css
```css
* { box-sizing: border-box; }
body {
  margin: 0;
  height: 100vh;
  display: flex;
  flex-direction: column;
  overflow: hidden;
  background: #fff;
  color: #404040;
  font: 11px/16px "Open Sans", "Noto Sans", sans-serif;
}
button, input, select, textarea { font: inherit; color: inherit; margin: 0; }
button { padding: 0; border: 0; background: none; }
svg { display: block; flex: none; }
h1, h2, h3 { margin: 0; font-size: 11px; }
.defs { position: absolute; width: 0; height: 0; }

.panel {
  display: flex;
  align-items: center;
  justify-content: space-between;
  height: 19px;
  padding: 0 5px 0 4px;
  background: linear-gradient(#5a5850, #3e3d38);
  color: #dfdbd2;
  flex: none;
}
.panel-title { font-weight: 700; }
.indicators { display: flex; align-items: center; gap: 8px; }
.lang { width: 15px; height: 15px; background: #dfdbd2; color: #3c3b37; font-size: 10px; line-height: 15px; text-align: center; }
.battery { display: flex; align-items: center; gap: 3px; }
.sound { margin-right: 3px; }

.desktop { display: flex; flex: 1; min-height: 0; }
.launcher {
  display: flex;
  flex-direction: column;
  gap: 4px;
  width: 43px;
  padding: 4px 4px 3px 3px;
  background: #3d332e;
  border-right: 1px solid #2b2420;
}
.app {
  position: relative;
  width: 35px;
  height: 35px;
  border-radius: 4px;
  background: linear-gradient(#7b726d, #4b413c 50%, #463d38);
  box-shadow: inset 0 0 1px 1px rgba(255, 255, 255, .18);
}
.app svg { width: 35px; height: 35px; }
.dash { background: linear-gradient(#b5a49a, #8d7b70); }
.files { background: linear-gradient(#b0606a, #7f2735); }
.qgis { background: linear-gradient(#b7d45f, #7ea82b); }
.term { background: linear-gradient(#c9c9c9, #999); }
.fox { background: linear-gradient(#c98d5f, #a86332); }
.bird { background: linear-gradient(#7aa6d8, #3d6dac); }
.pgblue { color: #4f86b5; }
.pg { color: #336791; }
.pg svg { filter: drop-shadow(0 0 1px #fff); }
.run::before, .active::after {
  content: "";
  position: absolute;
  top: 15px;
  left: -3px;
  border: 3px solid transparent;
  border-left-color: #ddd;
  border-right-width: 0;
}
.active::after { left: auto; right: -4px; border-left-width: 0; border-right: 3px solid #ddd; }
.trash { margin-top: auto; }

.browser { flex: 1; display: flex; flex-direction: column; min-width: 0; }
.tabs { display: flex; align-items: center; height: 29px; background: linear-gradient(#2d2c29, #3c3b37 6px); border-bottom: 1px solid #222; padding-left: 24px; }
.tab { display: flex; align-items: center; gap: 6px; color: #dfdbd2; }
.tab .tab-close { color: #d5d1c9; }
.tab-text { white-space: nowrap; }
.tab.current { gap: 0; color: #55534e; height: 28px; }
.tab.current .tab-close { color: #6b6965; margin-left: 4px; }
.tab-body { display: flex; align-items: center; height: 27px; margin-top: 1px; background: linear-gradient(#fbfbfb, #f6f5f4); }
.tab.current > svg { margin: 0 -1px; }
.new-tab { margin-left: -2px; }
.navbar { display: flex; align-items: center; height: 41px; padding: 0 9px 0 4px; background: linear-gradient(#f6f5f4, #f1f0ee); border-bottom: 1px solid #b8b6b2; }
.back {
  position: relative;
  display: grid;
  place-items: center;
  width: 32px;
  height: 32px;
  border: 1px solid #b9bfc8;
  border-radius: 50%;
  background: #f8f8f8;
  flex: none;
}
.urlbar, .search { display: flex; align-items: center; height: 24px; border: 1px solid #aaa8a4; border-radius: 3px; background: #fff; }
.urlbar { flex: 746; margin-left: -4px; padding: 0 4px 0 8px; gap: 6px; }
.urlbar input, .search input { flex: 1; min-width: 0; border: 0; padding: 0; background: none; outline: 0; }
.urlbar input { margin-left: -2px; color: #333; }
.search { flex: 229; margin-left: 7px; padding: 0 5px; gap: 6px; }
.search input::placeholder { color: #8f8f8f; opacity: 1; }
.bare { margin-left: -1px; }
.actions { display: flex; align-items: center; gap: 14px; margin-left: 10px; }
.act { display: grid; place-items: center; width: 24px; height: 24px; }
.act:first-child { margin-right: -7px; }
.slim { width: 10px; margin: 0 -1px 0 -8px; }
.menu { border-left: 1px solid #d3d6da; width: 33px; padding-left: 8px; height: 32px; margin-left: -5px; }
.abp { font: 700 7px "Open Sans", sans-serif; fill: #fff; }
.page { flex: 1; background: #fff; }

.window { position: absolute; display: flex; flex-direction: column; background: #f2f1f0; border-radius: 6px 6px 0 0; }
.qgis-window { left: 191px; top: 172px; width: 987px; height: 516px; box-shadow: 0 6px 28px rgba(0, 0, 0, .35); }
.dialog { left: 365px; top: 194px; width: 592px; height: 460px; box-shadow: 0 10px 36px rgba(0, 0, 0, .8); }
.titlebar {
  display: flex;
  align-items: center;
  height: 21px;
  padding-left: 5px;
  border-radius: 6px 6px 0 0;
  background: linear-gradient(#5c5a52, #3f3e39);
  color: #dfdbd2;
  flex: none;
}
.title { margin-left: 8px; padding-top: 2px; font-weight: 700; }
.dim { background: linear-gradient(#42413c, #3a3934); color: #85837b; }

.toolbar { display: flex; align-items: center; gap: 12px; height: 39px; padding: 0 2px 0 4px; }
.edit { height: 41px; }
.grip { width: 4px; height: 8px; background: repeating-linear-gradient(#c9c6c3 0 1px, transparent 1px 3px); flex: none; }
.toolbar .grip { margin-right: -3px; }
.edit .grip + .grip { margin-right: -4px; }
.tool { width: 24px; height: 24px; flex: none; }
.tool svg { width: 24px; height: 24px; overflow: visible; }
.blue { color: #6c96c8; }
.gray { color: #b4b4b4; filter: grayscale(1); }
.push { margin-left: auto; }
.chev { margin: 0 -7px 0 4px; }
.chev-last { margin-left: -4px; }
.edit-drop { margin: 0 -3px 0 -13px; }

.workspace { display: flex; flex: 1; min-height: 0; }
.sidebar { display: flex; flex-direction: column; align-items: center; gap: 12px; width: 60px; padding-top: 4px; }
.flat { width: 8px; height: 4px; margin-bottom: -4px; background: repeating-linear-gradient(90deg, #c9c6c3 0 1px, transparent 1px 3px); }
.new-layer { display: flex; align-items: center; gap: 12px; }
.layers { display: flex; flex-direction: column; width: 193px; }
.layers-title { padding: 4px 2px 5px; font-weight: 400; }
.tree { flex: 1; border: 1px solid #b9b7b4; background: #fff; }
.layer { display: flex; align-items: center; gap: 7px; height: 22px; padding-left: 7px; background: linear-gradient(#efeeed, #dedcda); color: #222; font-weight: 700; overflow: hidden; }
.layer-name { line-height: 14px; border-bottom: 1px solid #222; margin-left: -1px; }
.tickbox { position: relative; display: flex; align-items: center; gap: 5px; }
.tickbox input { position: absolute; opacity: 0; }
.swatch { display: block; width: 16px; height: 1px; margin: 9px 0 0 43px; background: #5a8083; }
.map { flex: 1; margin-left: 6px; border: 1px solid #b9b7b4; background: #fff; display: flex; justify-content: flex-end; overflow: hidden; }

.statusbar { display: flex; align-items: center; height: 27px; padding: 0 2px 0 200px; border-top: 1px solid #dcdad8; flex: none; }
.mini { display: grid; place-items: center; width: 18px; height: 18px; border: 1px solid #aaa8a5; border-radius: 3px; background: #f2f1f0; overflow: hidden; flex: none; }
.statusbar > label { margin-left: 10px; }
.coord { flex: 1; min-width: 0; height: 18px; margin-left: 10px; border: 1px solid #8f8d8a; border-radius: 3px; background: #f2f1f0; text-align: center; }
.combo { display: flex; width: 96px; height: 18px; margin: 0 9px 0 12px; border: 1px solid #8f8d8a; border-radius: 3px; background: #f2f1f0; }
.combo input { width: 70px; border: 0; border-right: 1px solid #8f8d8a; padding: 0 0 0 4px; background: none; }
.combo button { flex: 1; display: grid; place-items: center; }
.statusbar > .tickbox { margin-left: 9px; }
.epsg { margin: 0 11px 0 16px; color: #a3a19e; }
.warn { margin-left: 8px; }
.size-grip { margin: 8px 0 0 11px; }

.form { display: flex; flex: 1; padding: 21px 20px 0 20px; min-height: 0; }
.fields { width: 234px; }
.row { display: flex; align-items: center; justify-content: space-between; height: 22px; }
.tall { height: 25px; padding-left: 1px; }
.spaced { margin-top: 8px; }
.above { display: block; margin: 6px 0; }
.select { position: relative; display: block; height: 22px; }
.wide { width: 134px; }
.narrow { width: 83px; }
.select select, .select input {
  appearance: none;
  width: 100%;
  height: 22px;
  padding: 0 18px 0 4px;
  border: 1px solid #a9a7a4;
  border-top-color: #c4c2bf;
  border-radius: 4px;
  background: linear-gradient(#fff, #fafafa 60%, #ececeb);
}
.select svg { position: absolute; right: 5px; top: 5px; color: #666; }
.off { color: #a9a7a4; }
.off .select input { background: #e9e7e6; border-color: #c7c5c3; padding-left: 5px; }
.off .select svg { color: #b3b1ae; }
.spinner::after { content: ""; position: absolute; right: 16px; top: 1px; height: 20px; border-left: 1px solid #c7c5c3; }
.text { width: 142px; height: 22px; margin-bottom: 1px; padding: 0 3px; border: 1px solid #8f8d8a; border-radius: 3px; background: #fff; color: #333; }
.path { padding: 0 1px; }
.btn {
  width: 83px;
  height: 25px;
  padding-bottom: 1px;
  border: 1px solid #a9a7a4;
  border-top-color: #c4c2bf;
  border-radius: 4px;
  background: linear-gradient(#fff, #fafafa 55%, #ececeb);
}
.hot { border-color: #b3775f; background: linear-gradient(#fdae8d, #f48e66); }
.checks { display: flex; flex-direction: column; padding: 63px 0 0 1px; }
.check { display: flex; align-items: center; gap: 8px; height: 16px; margin-bottom: 11px; }
.check input { appearance: none; width: 14px; height: 14px; margin-left: 2px; border: 1px solid #8f8d8a; border-radius: 3px; background: #fff; }
.checks .pressed { width: 100%; height: 20px; margin-top: -1px; border-color: #8f8d8a; background: linear-gradient(#f0efee, #dbd9d7); line-height: 17px; }
.splitter { margin: 179px 12px 0 11px; }
.options { flex: 1; }
.group { display: flex; align-items: center; gap: 7px; height: 16px; margin-top: -10px; color: #333; }
.group svg { margin-top: 4px; }
.group + .group { margin-top: 26px; }
.custom { display: grid; grid-template-columns: 67px 1fr; gap: 6px 0; padding: 9px 0 0 15px; }
.custom label { margin-top: -1px; }
.custom textarea { height: 129px; border: 1px solid #b9b7b4; background: #fff; resize: none; }
.buttons { display: flex; gap: 8px; padding: 0 12px 12px; }
.help { margin-right: auto; }
```

FILE: map.js
```js
// Short fault traces, scattered in clusters: x, y, rx, ry, heading in degrees, count.
const clusters = [
  [40, 90, 18, 38, 110, 40], [46, 150, 24, 36, 100, 60], [84, 62, 14, 14, 60, 14],
  [30, 240, 14, 60, 110, 26], [60, 350, 12, 30, 80, 8],
  [66, 280, 10, 10, 40, 10], [150, 85, 12, 40, 90, 26], [192, 75, 14, 20, 100, 44],
  [262, 76, 30, 20, 160, 120], [230, 74, 40, 24, 140, 50], [332, 58, 40, 18, 120, 100],
  [356, 102, 24, 18, 50, 110], [208, 172, 14, 14, 120, 70], [240, 140, 30, 24, 30, 50],
  [192, 150, 26, 22, 70, 46], [164, 220, 10, 34, 100, 34], [124, 302, 14, 12, 30, 22],
  [120, 220, 14, 16, 120, 12], [222, 210, 40, 20, 160, 16],
  [202, 310, 16, 36, 118, 120], [158, 322, 14, 22, 120, 46], [240, 248, 28, 22, 130, 100],
  [262, 290, 16, 44, 95, 90], [284, 280, 16, 26, 20, 20], [300, 336, 20, 10, 10, 50],
  [354, 236, 14, 32, 75, 100], [324, 228, 6, 40, 95, 26], [322, 154, 6, 6, 20, 12],
  [380, 284, 12, 8, 150, 12], [168, 375, 12, 20, 110, 8], [182, 420, 4, 4, 40, 6],
  [264, 510, 12, 10, 80, 20], [290, 530, 10, 8, 10, 12], [276, 566, 24, 8, 28, 30],
  [244, 552, 14, 6, 20, 16], [250, 588, 6, 5, 20, 5], [340, 608, 4, 4, 30, 5],
  [390, 566, 6, 12, 70, 8], [294, 862, 8, 18, 110, 26], [336, 870, 12, 10, 140, 16],
  [364, 896, 6, 14, 100, 18], [352, 852, 8, 5, 20, 8], [276, 982, 28, 18, 95, 70],
  [296, 972, 20, 8, 10, 26], [172, 980, 12, 14, 60, 20], [38, 998, 18, 6, 20, 26],
  [312, 800, 6, 32, 105, 16], [236, 811, 8, 3, 20, 6], [372, 976, 16, 10, 50, 12]
];

let seed = 2927;
const rand = () => (seed = (seed * 16807) % 2147483647) / 2147483647;

let d = "";
for (const [cx, cy, rx, ry, heading, count] of clusters) {
  for (let i = 0; i < count; i++) {
    const t = rand() * Math.PI * 2, r = Math.sqrt(rand());
    const a = (heading + (rand() - 0.5) * 80) * Math.PI / 180;
    const len = 2 + rand() * 8;
    d += `M${Math.round(cx + Math.cos(t) * rx * r)} ${Math.round(cy + Math.sin(t) * ry * r)}` +
      `l${Math.round(Math.cos(a) * len)} ${Math.round(Math.sin(a) * len)}`;
  }
}
const path = document.createElementNS("http://www.w3.org/2000/svg", "path");
path.setAttribute("d", d);
document.getElementById("traces").append(path);
```
